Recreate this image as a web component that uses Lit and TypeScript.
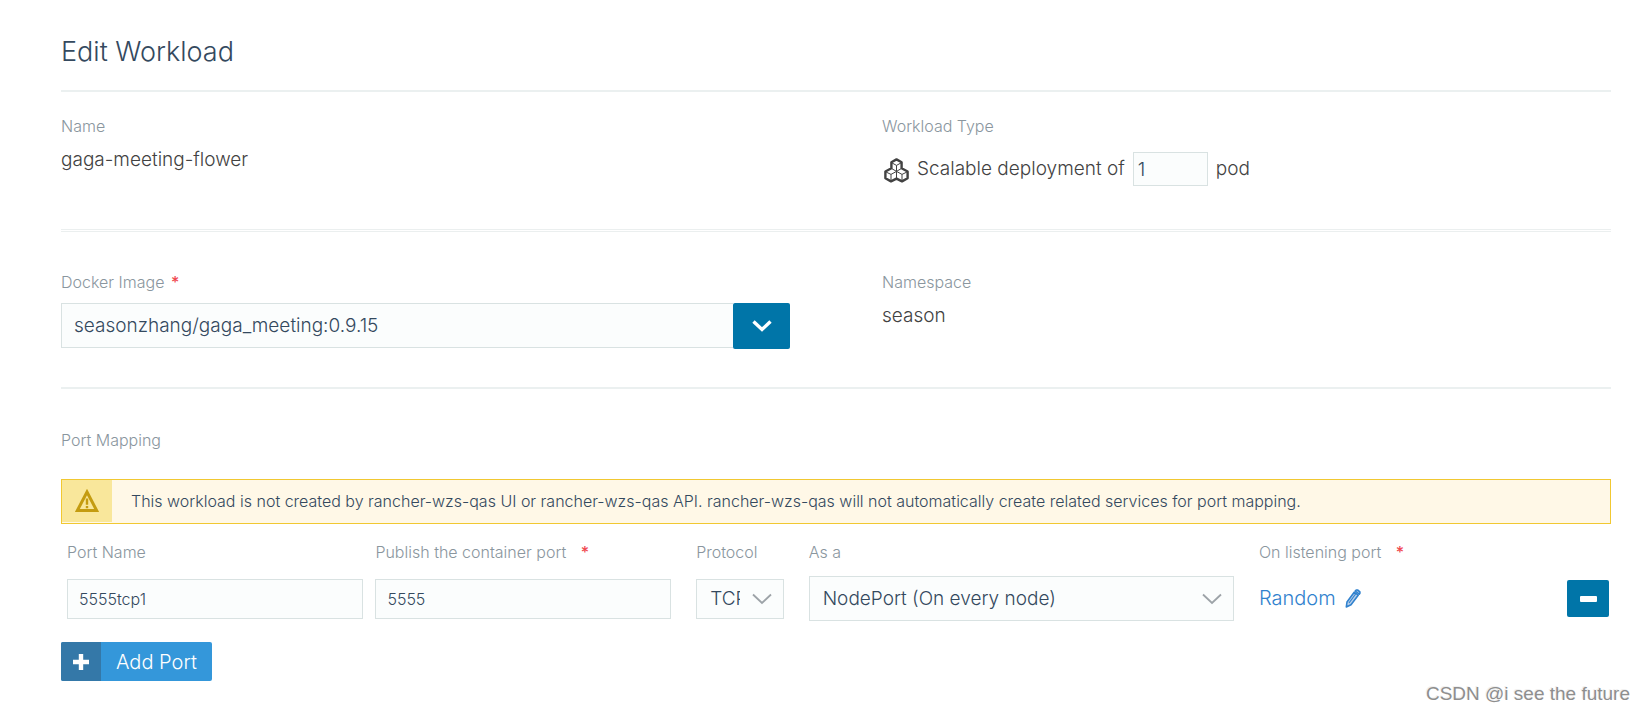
import { LitElement, html, css, svg } from "lit";
import { customElement, state } from "lit/decorators.js";

const chevron = svg`<path d="M1 1.5 L10 10 L19 1.5" fill="none" stroke="#9da3a8" stroke-width="1.8"/>`;

@customElement("app-root")
export class AppRoot extends LitElement {
  static styles = css`
    :host {
      display: block;
      background: #fff;
      color: #424242;
      font-family: Inter, "Open Sans", sans-serif;
      font-weight: 300;
      font-size: 19px;
      line-height: 24px;
    }
    * {
      box-sizing: border-box;
    }
    main {
      padding: 36px 33px 0 61px;
    }
    h1 {
      margin: 0;
      padding-bottom: 22px;
      border-bottom: 2px solid #ebf0f0;
      color: #34495e;
      font-size: 27px;
      line-height: 32px;
      font-weight: 300;
    }
    .pair {
      display: grid;
      grid-template-columns: 1fr 1fr;
      column-gap: 92px;
    }
    .basics {
      padding: 22px 0 43px;
      border-bottom: 3px double #ebefef;
    }
    .image {
      padding: 38px 0;
      border-bottom: 2px solid #ebf0f0;
    }
    .label {
      display: block;
      margin: 0;
      color: #8a969e;
      font-size: 16px;
      line-height: 24px;
      font-weight: 300;
      text-align: left;
    }
    .req {
      color: #f0484f;
      font-weight: 500;
      margin-left: 2px;
    }
    .wide {
      margin-left: 10px;
    }
    .value {
      margin-top: 10px;
    }
    .scale {
      display: flex;
      align-items: center;
      gap: 8px;
      margin-top: 14px;
    }
    .scale svg {
      margin: 2px 0 0 2px;
      flex: none;
    }
    input,
    select {
      width: 100%;
      border: 1px solid #d9e2e2;
      border-radius: 0;
      background: #fbfdfd;
      color: #34495e;
      font: inherit;
      outline: none;
    }
    .count {
      width: 75px;
      height: 34px;
      padding: 0 4px;
      appearance: textfield;
    }
    .combo {
      display: flex;
      margin-top: 9px;
    }
    .combo input {
      flex: 1;
      min-width: 0;
      height: 45px;
      padding: 0 12px;
      border-right: 0;
    }
    button {
      border: 0;
      padding: 0;
      border-radius: 2px;
      background: #0075a8;
      color: #fff;
      font: inherit;
      display: flex;
      align-items: center;
      justify-content: center;
      cursor: pointer;
    }
    .drop {
      width: 57px;
      height: 46px;
    }
    h2.label {
      padding: 39px 0 27px;
    }
    .banner {
      display: flex;
      border: 1px solid #f1c831;
      background: #fff8e7;
      color: #34495e;
      font-size: 16px;
      line-height: 24px;
    }
    .banner svg {
      display: block;
    }
    .mark {
      flex: none;
      width: 50px;
      display: flex;
      align-items: center;
      justify-content: center;
      background: #f9e79b;
      border-bottom: 1px solid #fff8e7;
    }
    .banner p {
      margin: 0;
      padding: 9px 19px 10px;
    }
    .ports {
      padding: 0 2px 0 6px;
    }
    table {
      width: 100%;
      table-layout: fixed;
      border-collapse: collapse;
    }
    th,
    td {
      padding: 0 25px 0 0;
      text-align: left;
      vertical-align: middle;
    }
    th {
      padding-top: 16px;
      padding-bottom: 12px;
      white-space: nowrap;
    }
    .name {
      width: 20%;
      padding-right: 12px;
    }
    .container {
      width: 20.8%;
    }
    .proto {
      width: 7.3%;
    }
    .kind {
      width: 29.2%;
    }
    .act {
      width: 42px;
      padding-right: 0;
    }
    .small {
      height: 40px;
      padding: 0 11px;
      font-size: 16px;
      display: block;
    }
    .pick {
      display: grid;
      align-items: center;
    }
    .pick > * {
      grid-area: 1 / 1;
    }
    .pick svg {
      justify-self: end;
      margin-right: 12px;
      pointer-events: none;
    }
    select {
      appearance: none;
      height: 45px;
      padding: 0 43px 0 13px;
    }
    select.short {
      height: 40px;
    }
    a {
      display: inline-flex;
      align-items: center;
      gap: 9px;
      color: #3182ce;
      font-size: 20px;
      text-decoration: none;
    }
    .minus {
      width: 42px;
      height: 37px;
    }
    .add {
      margin-top: 21px;
      height: 39px;
      background: #3497da;
      align-items: stretch;
      overflow: hidden;
      font-size: 20px;
    }
    .plus {
      width: 40px;
      display: flex;
      align-items: center;
      justify-content: center;
      background: #3478a8;
    }
    .text {
      padding: 0 15px;
      line-height: 40px;
    }
    footer {
      padding: 1px 14px 4px;
      text-align: right;
      font: 19px/24px "Liberation Sans", sans-serif;
      color: #8e8e8e;
      text-shadow: -1px -1px 0 #f0f0f0;
    }
  `;

  @state() private pods = 1;

  private changePods(e: Event) {
    this.pods = Number((e.target as HTMLInputElement).value);
  }

  render() {
    return html`
      <main>
        <h1>Edit Workload</h1>
        <section class="pair basics">
          <div>
            <div class="label">Name</div>
            <div class="value">gaga-meeting-flower</div>
          </div>
          <div>
            <label class="label" for="pods">Workload Type</label>
            <div class="scale">
              <svg width="25" height="25" viewBox="0 0 25 25" fill="none" stroke="#424242" stroke-linejoin="round">
                <path stroke-width="2.4" d="M12.5 1.4 L17.6 4.2 V10.2 L23.6 13.5 V20.2 L18 23.4 L12.5 20.6 L7 23.4 L1.4 20.2 V13.5 L7.4 10.2 V4.2 Z"/>
                <path stroke-width="1" d="M7.4 4.6 L12.5 7.4 L17.6 4.6 M12.5 7.4 V13.4 M7.4 10.4 L12.5 13.4 L17.6 10.4 M1.6 13.8 L7 16.4 L12.5 13.4 L18 16.4 L23.4 13.8 M7 16.4 V23 M18 16.4 V23 M12.5 13.4 V20.4"/>
              </svg>
              <span>Scalable deployment of</span>
              <input class="count" id="pods" type="number" min="0" .value=${String(this.pods)} @input=${this.changePods} />
              <span>${this.pods === 1 ? "pod" : "pods"}</span>
            </div>
          </div>
        </section>

        <section class="pair image">
          <div>
            <label class="label" for="image">Docker Image <span class="req">*</span></label>
            <div class="combo">
              <input id="image" type="text" value="seasonzhang/gaga_meeting:0.9.15" />
              <button class="drop" type="button" aria-label="Show images">
                <svg width="20" height="14" viewBox="0 0 20 14"><path d="M1.5 2.5 L10 10.5 L18.5 2.5" fill="none" stroke="#fff" stroke-width="3.4"/></svg>
              </button>
            </div>
          </div>
          <div>
            <div class="label">Namespace</div>
            <div class="value">season</div>
          </div>
        </section>

        <section>
          <h2 class="label">Port Mapping</h2>
          <div class="banner" role="alert">
            <div class="mark">
              <svg width="24" height="24" viewBox="0 0 24 24">
                <path d="M12 3 L21.6 21.4 H2.4 Z" fill="none" stroke="#c49c10" stroke-width="3"/>
                <path d="M12 9.5 V15.8 M12 17 V19.2" stroke="#c49c10" stroke-width="2.4"/>
              </svg>
            </div>
            <p>This workload is not created by rancher-wzs-qas UI or rancher-wzs-qas API. rancher-wzs-qas will not automatically create related services for port mapping.</p>
          </div>
          <div class="ports">
            <table>
              <thead>
                <tr>
                  <th class="name"><label class="label" for="pname">Port Name</label></th>
                  <th class="container"><label class="label" for="cport">Publish the container port <span class="req wide">*</span></label></th>
                  <th class="proto"><label class="label" for="proto">Protocol</label></th>
                  <th class="kind"><label class="label" for="kind">As a</label></th>
                  <th><span class="label">On listening port <span class="req wide">*</span></span></th>
                  <td class="act"></td>
                </tr>
              </thead>
              <tbody>
                <tr>
                  <td class="name"><input class="small" id="pname" type="text" value="5555tcp1" /></td>
                  <td><input class="small" id="cport" type="text" value="5555" /></td>
                  <td>
                    <div class="pick">
                      <select class="short" id="proto"><option>TCP</option><option>UDP</option></select>
                      <svg width="20" height="12" viewBox="0 0 20 12">${chevron}</svg>
                    </div>
                  </td>
                  <td>
                    <div class="pick">
                      <select id="kind"><option>NodePort (On every node)</option><option>HostPort</option></select>
                      <svg width="20" height="12" viewBox="0 0 20 12">${chevron}</svg>
                    </div>
                  </td>
                  <td>
                    <a href="#port">Random
                      <svg width="16" height="19" viewBox="0 0 16 19" stroke="#3182ce" stroke-linejoin="round">
                        <path d="M2 13 L9.2 3.2 L13.2 6.2 L6 15.8 L1.3 18 Z" fill="#b9cfe9" stroke-width="1.6"/>
                        <path d="M10.2 2 L11.2 1 H12.6 L14.9 2.8 V4.2 L14.2 5.2 Z" fill="#b9cfe9" stroke-width="1.6"/>
                        <path d="M4 14 L10.6 5" stroke-width="1.2"/>
                      </svg>
                    </a>
                  </td>
                  <td class="act">
                    <button class="minus" type="button" aria-label="Remove port">
                      <svg width="17" height="6" viewBox="0 0 17 6"><rect width="17" height="6" rx="1" fill="#fff"/></svg>
                    </button>
                  </td>
                </tr>
              </tbody>
            </table>
          </div>
          <button class="add" type="button">
            <span class="plus"><svg width="16" height="16" viewBox="0 0 16 16"><path d="M8 0 V16 M0 8 H16" stroke="#fff" stroke-width="4.4"/></svg></span>
            <span class="text">Add Port</span>
          </button>
        </section>
      </main>
      <footer>CSDN @i see the future</footer>
    `;
  }
}
